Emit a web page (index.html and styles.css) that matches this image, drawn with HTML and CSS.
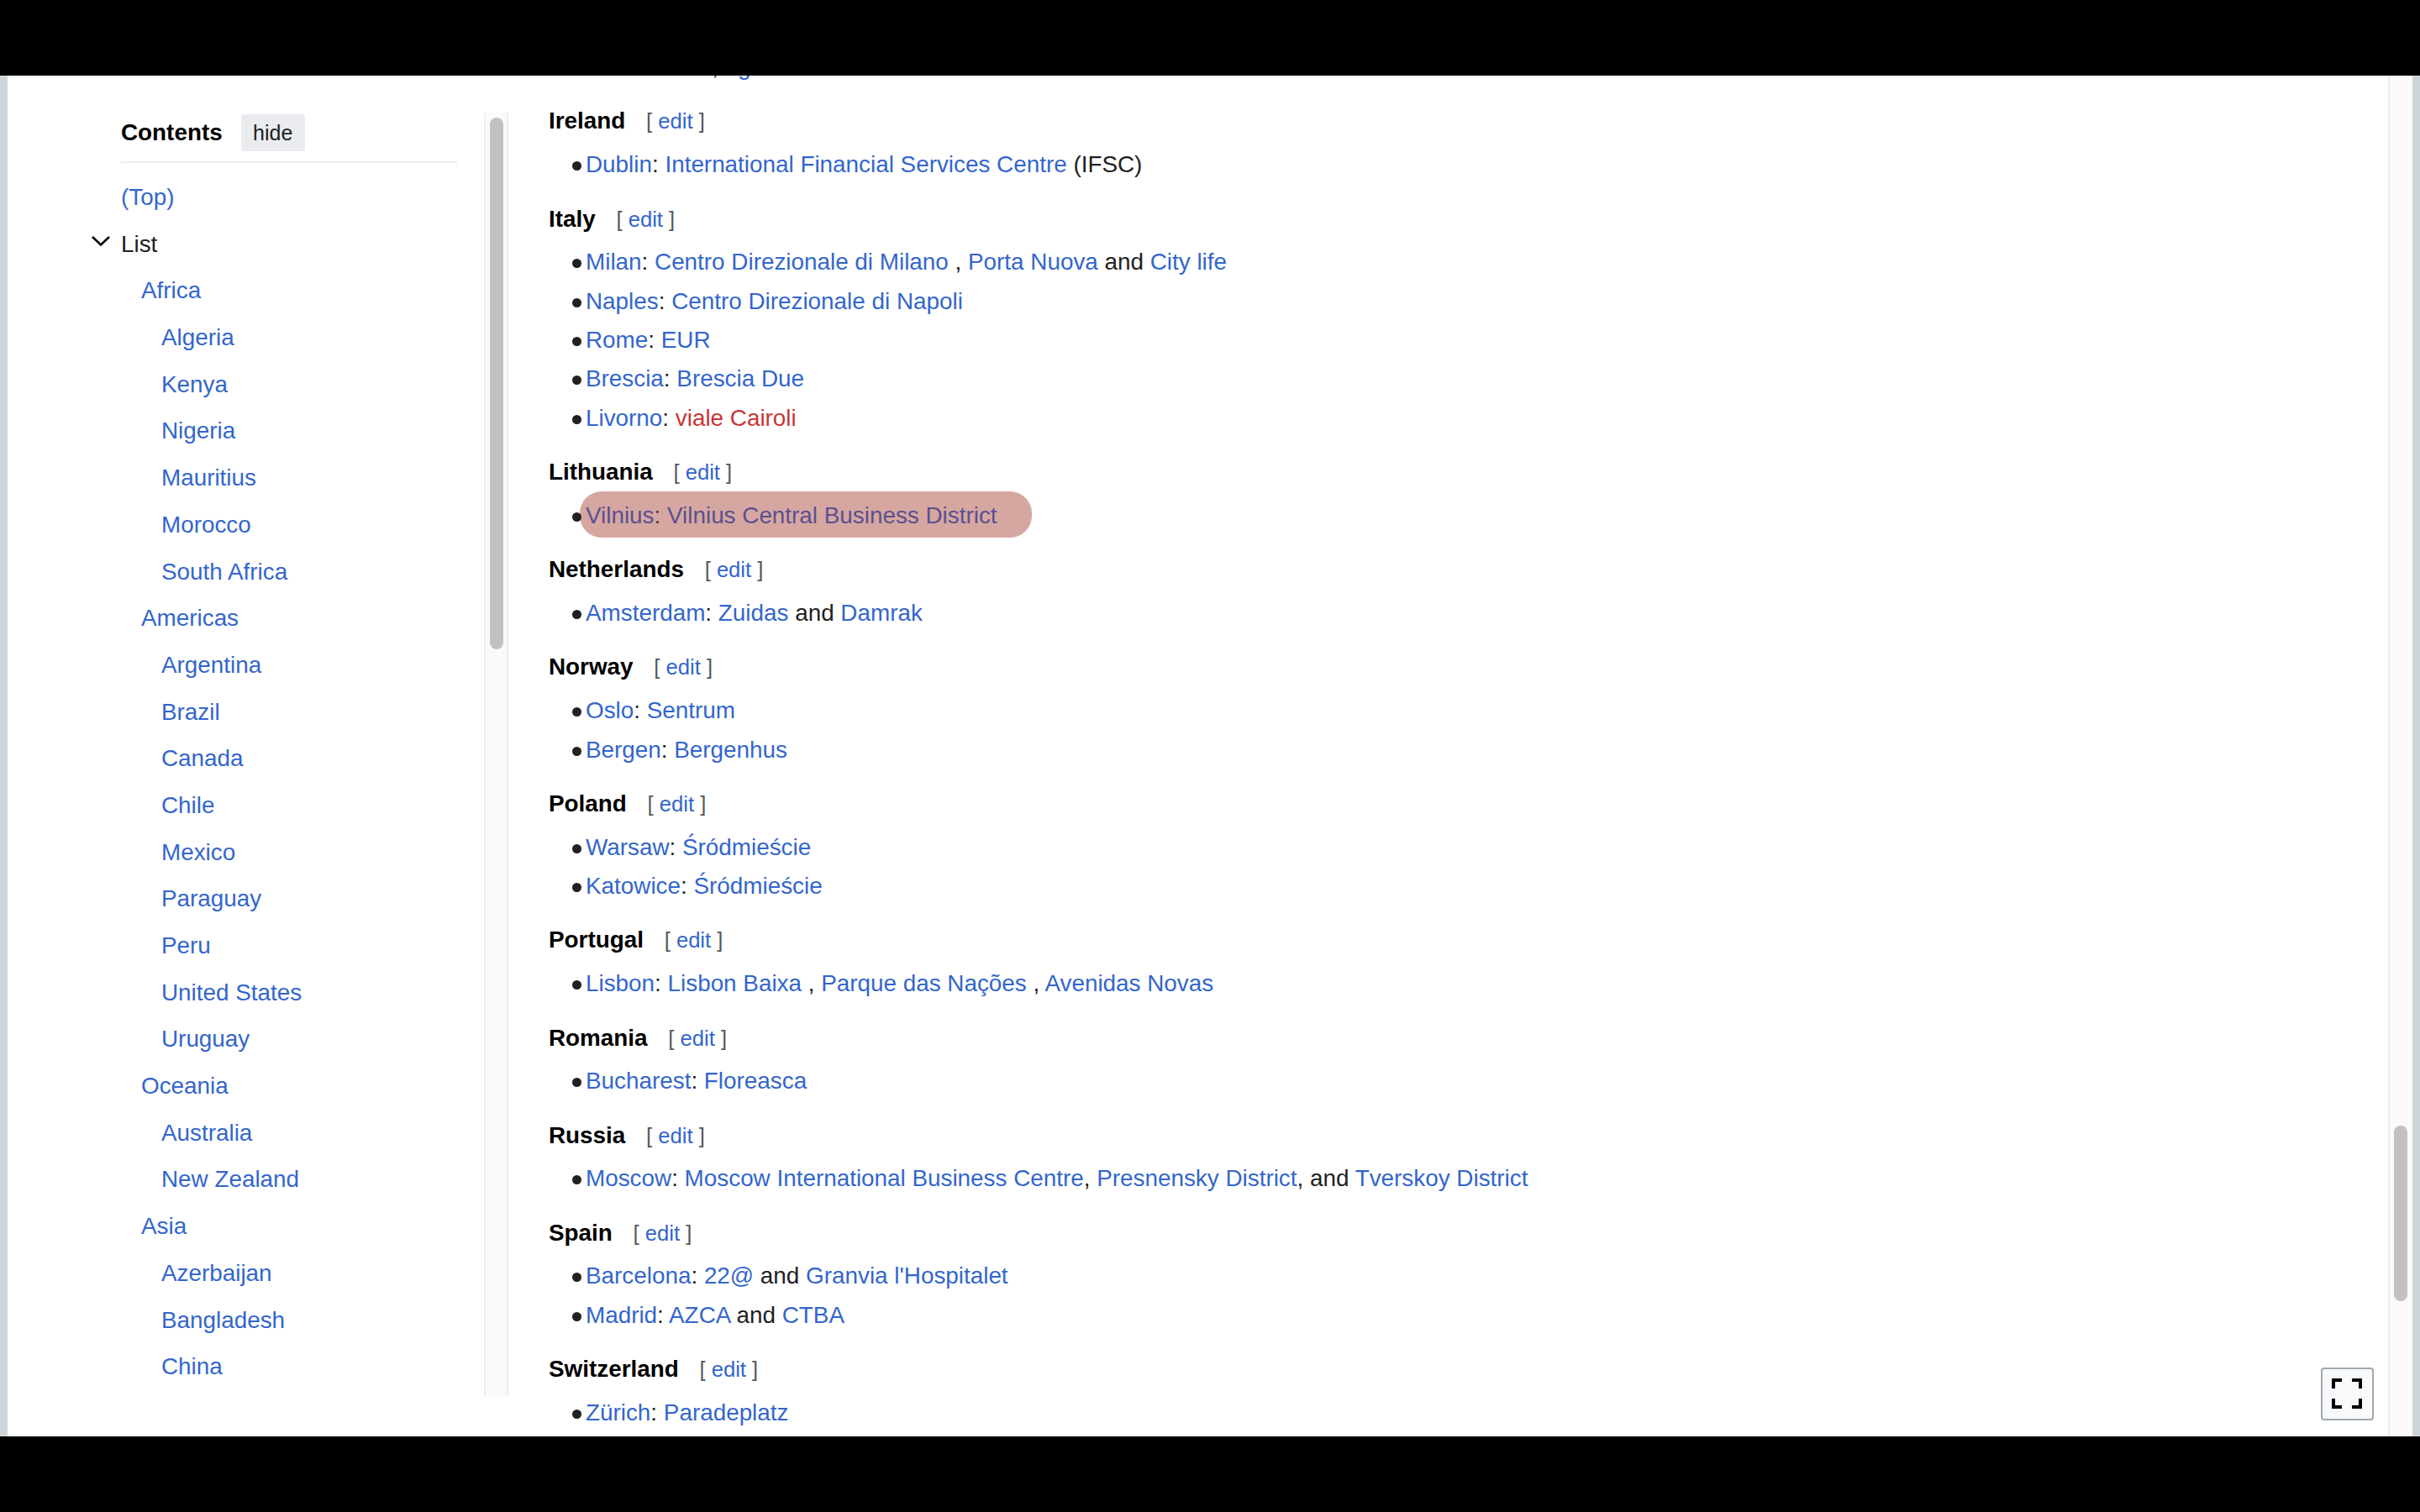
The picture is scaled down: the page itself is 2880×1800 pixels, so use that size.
FILE: index.html
```html
<!DOCTYPE html>
<html lang="en">
  <head>
    <meta charset="UTF-8" />
    <title>List of central business districts</title>
    <link rel="stylesheet" href="styles.css">
  </head>
  <body>
    <div class="screen">
      <div class="edge"></div>
      <div class="page">
        <nav class="toc-column">
          <div class="toc-scroll">
            <div class="toc">
              <div class="toc-head">
                <span class="toc-title">Contents</span>
                <button class="toc-hide">hide</button>
              </div>
              <ul class="toc-list">
                <li><a href="#">(Top)</a></li>
                <li class="toc-open">
                  <svg class="toc-arrow" viewBox="0 0 22 12"><path d="M1 1 L11 10.5 L21 1" /></svg>
                  List
                </li>
                <li class="level-2"><a href="#">Africa</a></li>
                <li class="level-3"><a href="#">Algeria</a></li>
                <li class="level-3"><a href="#">Kenya</a></li>
                <li class="level-3"><a href="#">Nigeria</a></li>
                <li class="level-3"><a href="#">Mauritius</a></li>
                <li class="level-3"><a href="#">Morocco</a></li>
                <li class="level-3"><a href="#">South Africa</a></li>
                <li class="level-2"><a href="#">Americas</a></li>
                <li class="level-3"><a href="#">Argentina</a></li>
                <li class="level-3"><a href="#">Brazil</a></li>
                <li class="level-3"><a href="#">Canada</a></li>
                <li class="level-3"><a href="#">Chile</a></li>
                <li class="level-3"><a href="#">Mexico</a></li>
                <li class="level-3"><a href="#">Paraguay</a></li>
                <li class="level-3"><a href="#">Peru</a></li>
                <li class="level-3"><a href="#">United States</a></li>
                <li class="level-3"><a href="#">Uruguay</a></li>
                <li class="level-2"><a href="#">Oceania</a></li>
                <li class="level-3"><a href="#">Australia</a></li>
                <li class="level-3"><a href="#">New Zealand</a></li>
                <li class="level-2"><a href="#">Asia</a></li>
                <li class="level-3"><a href="#">Azerbaijan</a></li>
                <li class="level-3"><a href="#">Bangladesh</a></li>
                <li class="level-3"><a href="#">China</a></li>
              </ul>
            </div>
            <div class="toc-track"><div class="toc-thumb"></div></div>
          </div>
        </nav>

        <main class="content">
          <ul class="cut-row">
            <li><a href="#">Belváros</a>: <a href="#">XI</a>, <a href="#">ag</a></li>
          </ul>

          <h3>Ireland <span class="edit">[ <a href="#">edit</a> ]</span></h3>
          <ul>
            <li><a href="#">Dublin</a>: <a href="#">International Financial Services Centre</a> (IFSC)</li>
          </ul>

          <h3>Italy <span class="edit">[ <a href="#">edit</a> ]</span></h3>
          <ul>
            <li><a href="#">Milan</a>: <a href="#">Centro Direzionale di Milano</a> , <a href="#">Porta Nuova</a> and <a href="#">City life</a></li>
            <li><a href="#">Naples</a>: <a href="#">Centro Direzionale di Napoli</a></li>
            <li><a href="#">Rome</a>: <a href="#">EUR</a></li>
            <li><a href="#">Brescia</a>: <a href="#">Brescia Due</a></li>
            <li><a href="#">Livorno</a>: <a href="#" class="new">viale Cairoli</a></li>
          </ul>

          <h3>Lithuania <span class="edit">[ <a href="#">edit</a> ]</span></h3>
          <ul>
            <li><span class="highlight"><a href="#">Vilnius</a>: <a href="#">Vilnius Central Business District</a></span></li>
          </ul>

          <h3>Netherlands <span class="edit">[ <a href="#">edit</a> ]</span></h3>
          <ul>
            <li><a href="#">Amsterdam</a>: <a href="#">Zuidas</a> and <a href="#">Damrak</a></li>
          </ul>

          <h3>Norway <span class="edit">[ <a href="#">edit</a> ]</span></h3>
          <ul>
            <li><a href="#">Oslo</a>: <a href="#">Sentrum</a></li>
            <li><a href="#">Bergen</a>: <a href="#">Bergenhus</a></li>
          </ul>

          <h3>Poland <span class="edit">[ <a href="#">edit</a> ]</span></h3>
          <ul>
            <li><a href="#">Warsaw</a>: <a href="#">Śródmieście</a></li>
            <li><a href="#">Katowice</a>: <a href="#">Śródmieście</a></li>
          </ul>

          <h3>Portugal <span class="edit">[ <a href="#">edit</a> ]</span></h3>
          <ul>
            <li><a href="#">Lisbon</a>: <a href="#">Lisbon Baixa</a> , <a href="#">Parque das Nações</a> , <a href="#">Avenidas Novas</a></li>
          </ul>

          <h3>Romania <span class="edit">[ <a href="#">edit</a> ]</span></h3>
          <ul>
            <li><a href="#">Bucharest</a>: <a href="#">Floreasca</a></li>
          </ul>

          <h3>Russia <span class="edit">[ <a href="#">edit</a> ]</span></h3>
          <ul>
            <li><a href="#">Moscow</a>: <a href="#">Moscow International Business Centre</a>, <a href="#">Presnensky District</a>, and <a href="#">Tverskoy District</a></li>
          </ul>

          <h3>Spain <span class="edit">[ <a href="#">edit</a> ]</span></h3>
          <ul>
            <li><a href="#">Barcelona</a>: <a href="#">22@</a> and <a href="#">Granvia l'Hospitalet</a></li>
            <li><a href="#">Madrid</a>: <a href="#">AZCA</a> and <a href="#">CTBA</a></li>
          </ul>

          <h3>Switzerland <span class="edit">[ <a href="#">edit</a> ]</span></h3>
          <ul>
            <li><a href="#">Zürich</a>: <a href="#">Paradeplatz</a></li>
          </ul>
        </main>

        <div class="page-track"><div class="page-thumb"></div></div>

        <button class="fullscreen" aria-label="Fullscreen">
          <svg viewBox="0 0 36 36"><path d="M2 12 V2 H12 M24 2 H34 V12 M34 24 V34 H24 M12 34 H2 V24" /></svg>
        </button>
      </div>
      <div class="edge"></div>
    </div>
  </body>
</html>
```

FILE: styles.css
```css
html, body {
  margin: 0;
  height: 100%;
  background: #000;
}
body {
  font-family: "Liberation Sans", Arial, sans-serif;
  font-size: 27.85px;
  color: #202122;
  padding: 90px 0;
  box-sizing: border-box;
  overflow: hidden;
}
a {
  color: #3366cc;
  text-decoration: none;
}
a.new {
  color: #c93636;
}
ul {
  list-style: none;
  margin: 0;
  padding: 0;
}
.screen {
  display: flex;
  height: 1620px;
}
.edge {
  width: 9px;
  background: #ccd5da;
}
.page {
  flex: 1;
  display: flex;
  background: #fff;
  position: relative;
  overflow: hidden;
}

/* sidebar contents */
.toc-column {
  width: 644px;
  flex: none;
  padding: 44px 0 48px 0;
  box-sizing: border-box;
}
.toc-scroll {
  display: flex;
  height: 100%;
}
.toc {
  width: 567px;
  flex: none;
  padding-left: 135px;
  box-sizing: border-box;
  overflow: hidden;
}
.toc-head {
  display: flex;
  align-items: center;
  gap: 22px;
  width: 400px;
  padding: 2px 0 12px;
  border-bottom: 2px solid #eaecf0;
}
.toc-title {
  font-weight: bold;
  color: #000;
}
.toc-hide {
  width: 76px;
  height: 44px;
  padding: 0;
  border: 0;
  border-radius: 3px;
  background: #eaecf0;
  font: 25px "Liberation Sans", Arial, sans-serif;
  color: #202122;
}
.toc-list {
  margin-top: 13px;
}
.toc-list li {
  height: 55.7px;
  line-height: 55.7px;
  white-space: nowrap;
  position: relative;
}
.toc-list .level-2 {
  padding-left: 24px;
}
.toc-list .level-3 {
  padding-left: 48px;
}
.toc-arrow {
  position: absolute;
  left: -35px;
  top: 18px;
  width: 22px;
  height: 12px;
  fill: none;
  stroke: #000;
  stroke-width: 2.5;
}
.toc-track {
  width: 29px;
  flex: none;
  padding: 6px 4px 0 5px;
  box-sizing: border-box;
  background: #fafafa;
  border-left: 2px solid #eeeeee;
  border-right: 2px solid #eeeeee;
}
.toc-thumb {
  height: 633px;
  border-radius: 8px;
  background: #c1c1c1;
}

/* article */
.content {
  flex: 1;
  min-width: 0;
}
.cut-row {
  margin-top: -33px;
}
.content h3 {
  margin: 0;
  padding: 24px 0 11.7px;
  font-size: 27.85px;
  line-height: 34px;
  color: #000;
}
.content ul li {
  position: relative;
  margin-left: 44px;
  line-height: 46.4px;
  white-space: nowrap;
}
.content ul li::before {
  content: "";
  position: absolute;
  left: -16px;
  top: 19px;
  width: 11px;
  height: 11px;
  border-radius: 50%;
  background: #202122;
}
.edit {
  font-weight: normal;
  font-size: 25.6px;
  color: #54595d;
  margin-left: 17px;
}
.highlight {
  background: #d6a7a0;
  border-radius: 26px;
  padding: 13px 41px 11px 7px;
  margin-left: -7px;
  color: #5a3032;
}
.highlight a {
  color: #5b5090;
}

/* page scrollbar */
.page-track {
  width: 29px;
  flex: none;
  background: #fafafa;
  border-left: 2px solid #eeeeee;
  box-sizing: border-box;
  padding: 1250px 6px 0 5px;
}
.page-thumb {
  height: 209px;
  border-radius: 8px;
  background: #c1c1c1;
}
.fullscreen {
  position: absolute;
  right: 46px;
  bottom: 19px;
  width: 63px;
  height: 63px;
  padding: 11px 12px 12px 11px;
  background: #f8f9fa;
  border: 2px solid #a2a9b1;
  border-radius: 4px;
  box-sizing: border-box;
}
.fullscreen svg {
  display: block;
  width: 36px;
  height: 36px;
  fill: none;
  stroke: #000;
  stroke-width: 4;
}
```
